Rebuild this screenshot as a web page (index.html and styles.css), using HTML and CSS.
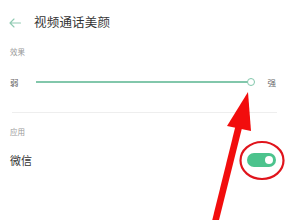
FILE: index.html
```html
<!DOCTYPE html>
<html lang="zh">
<head>
<meta charset="utf-8">
<link rel="stylesheet" href="styles.css">
</head>
<body>
<div class="page">
  <header class="topbar">
    <svg class="back" width="12" height="10" viewBox="0 0 12 10"><path d="M11.5 5H1M5 1L1 5l4 4" fill="none" stroke="#8fcab2" stroke-width="1.1" stroke-linecap="round" stroke-linejoin="round"/></svg>
    <span class="title">视频通话美颜</span>
  </header>
  <div class="label label-effect">效果</div>
  <div class="slider-row">
    <span class="end">弱</span>
    <div class="track"><span class="thumb"></span></div>
    <span class="end">强</span>
  </div>
  <div class="divider"></div>
  <div class="label label-app">应用</div>
  <div class="app-row">
    <span class="app-name">微信</span>
    <span class="toggle"><span class="knob"></span></span>
  </div>
  <svg class="annot" width="287" height="220" viewBox="0 0 287 220">
    <ellipse cx="262" cy="160.5" rx="21.5" ry="18.5" fill="none" stroke="#e0141c" stroke-width="2.2"/>
    <path d="M212 221 L235.5 126 L242 128 L218.5 222 Z" fill="#f20d0d"/>
    <path d="M248 92 L227 126 L251 131 Z" fill="#f20d0d"/>
  </svg>
</div>
</body>
</html>
```
FILE: styles.css
```css
html, body {
  margin: 0;
  padding: 0;
  background: #fff;
}
body {
  font-family: "Noto Sans CJK SC", "Noto Sans", sans-serif;
  width: 287px;
  height: 220px;
  overflow: hidden;
}
.page {
  position: relative;
  width: 287px;
  height: 220px;
}
.topbar {
  height: 44px;
  display: flex;
  align-items: center;
  padding-left: 9px;
  gap: 13px;
  padding-top: 1px;
  box-sizing: border-box;
}
.back {
  display: block;
}
.title {
  font-size: 12.5px;
  color: #333;
  line-height: 1;
  letter-spacing: 0.2px;
}
.label {
  font-size: 7.5px;
  color: #999;
  padding-left: 10px;
  line-height: 10px;
}
.label-effect {
  margin-top: 3px;
}
.slider-row {
  display: flex;
  align-items: center;
  height: 20px;
  margin-top: 15px;
  padding: 0 11px 0 10px;
}
.end {
  font-size: 8.5px;
  color: #666;
  line-height: 1;
}
.track {
  position: relative;
  flex: 1;
  height: 2px;
  background: #82c7ab;
  margin: 0 16px 0 17px;
}
.thumb {
  position: absolute;
  right: -4px;
  top: -3.5px;
  width: 6px;
  height: 6px;
  border: 1.5px solid #82c7ab;
  border-radius: 50%;
  background: #fff;
}
.divider {
  height: 1px;
  background: #eeeeee;
  margin: 20px 10px 0 12px;
}
.label-app {
  margin-top: 14px;
}
.app-row {
  display: flex;
  align-items: center;
  justify-content: space-between;
  height: 24px;
  margin-top: 11px;
  padding: 0 11px 0 10px;
}
.app-name {
  font-size: 11px;
  color: #333;
  line-height: 1;
}
.toggle {
  position: relative;
  width: 29px;
  height: 14px;
  border-radius: 7px;
  background: #4cc38d;
}
.knob {
  position: absolute;
  right: 3px;
  top: 3px;
  width: 8px;
  height: 8px;
  border-radius: 50%;
  background: #fff;
}
.annot {
  position: absolute;
  left: 0;
  top: 0;
  pointer-events: none;
}
```
